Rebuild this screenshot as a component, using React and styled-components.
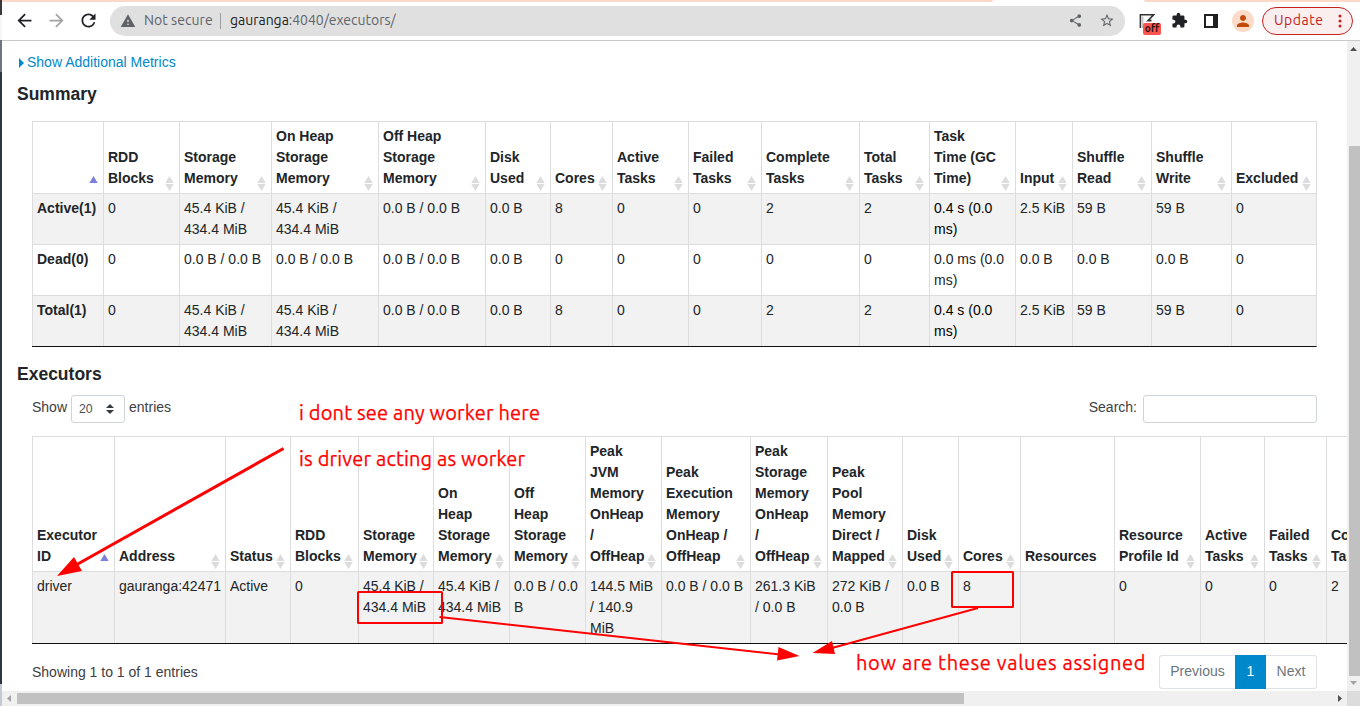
import React from "react";
import styled, { createGlobalStyle } from "styled-components";
import {
  MdArrowBack,
  MdArrowForward,
  MdRefresh,
  MdWarning,
  MdShare,
  MdStarBorder,
  MdExtension,
  MdPerson,
} from "react-icons/md";

const Global = createGlobalStyle`
  *, *::before, *::after { box-sizing: border-box; }
  body {
    margin: 0;
    overflow: hidden;
    background: #fff;
    color: #212529;
    font: 14px/21px "Liberation Sans", Arial, sans-serif;
  }
`;

const uiFont = `Ubuntu, "Noto Sans", sans-serif`;

const Screen = styled.div`
  position: relative;
  display: flex;
  width: 1360px;
  height: 706px;
  overflow: hidden;
`;

const DesktopEdge = styled.div`
  flex: 0 0 2px;
  background: linear-gradient(
    to bottom,
    #3a3a3a 0 15px,
    #f6f6f6 15px 40px,
    #70747f 40px 72px,
    #2b3643 72px 684px,
    #c4c9d3 684px
  );
`;

const Browser = styled.div`
  flex: 1;
  min-width: 0;
  display: flex;
  flex-direction: column;
`;

/* ---------- browser toolbar ---------- */

const TabStrip = styled.div`
  display: flex;
  justify-content: space-between;
  height: 2px;
  background: #fff;
`;

const TabEdge = styled.span`
  width: ${(p) => p.$width}px;
  background: #fcd9c6;
  border-radius: ${(p) => (p.$right ? "0 0 0 3px" : "0 0 3px 0")};
`;

const Toolbar = styled.div`
  display: flex;
  align-items: center;
  height: 39px;
  padding: 0 7px 1px 11px;
  border-bottom: 1px solid #c9c9c9;
  font-family: ${uiFont};
`;

const NavButton = styled.span`
  flex: none;
  display: flex;
  align-items: center;
  justify-content: center;
  width: 22px;
  height: 22px;
  margin-right: 10px;
  color: ${(p) => (p.$muted ? "#a3a3a3" : "#202124")};
`;

const Omnibox = styled.div`
  flex: 0 0 1015px;
  display: flex;
  align-items: center;
  height: 30px;
  margin-left: 1px;
  padding: 0 10px;
  border-radius: 15px;
  background: #e0e0e0;
  color: #5f6368;
`;

const SecurityLabel = styled.span`
  width: 76px;
  margin-left: 8px;
  font-size: 14px;
  letter-spacing: 0.05px;
  white-space: nowrap;
`;

const Divider = styled.span`
  width: 1px;
  height: 16px;
  margin-right: 9px;
  background: #9a9da1;
`;

const Url = styled.span`
  flex: 1;
  font-size: 14px;
  letter-spacing: -0.02px;
  white-space: nowrap;

  b {
    font-weight: 400;
    color: #202124;
  }
`;

const BoxAction = styled.span`
  display: flex;
  justify-content: center;
  width: 16px;
  margin-left: ${(p) => p.$gap || 0}px;
`;

const Extensions = styled.div`
  flex: none;
  display: flex;
  align-items: center;
  margin-left: 11px;
  color: #202124;
`;

const ExtensionSlot = styled.span`
  position: relative;
  display: flex;
  align-items: center;
  justify-content: center;
  width: 22px;
  height: 22px;
  margin-right: 10px;
`;

const OffBadge = styled.span`
  position: absolute;
  left: 7px;
  top: 13px;
  width: 18px;
  height: 12px;
  border-radius: 2px;
  background: #ff544d;
  color: #2b1010;
  font: 700 10px/12px ${uiFont};
  text-align: center;
`;

const Avatar = styled.span`
  display: flex;
  align-items: center;
  justify-content: center;
  width: 22px;
  height: 22px;
  border-radius: 50%;
  background: #fcdac8;
  color: #c2490b;
`;

const UpdateButton = styled.span`
  display: flex;
  align-items: center;
  justify-content: space-between;
  width: 91px;
  height: 28px;
  margin-left: 8px;
  padding: 0 10px 0 11px;
  border: 1px solid #c5221f;
  border-radius: 14px;
  background: #faeeee;
  color: #c5221f;
  font-size: 14px;
  letter-spacing: 0.55px;
`;

/* ---------- page ---------- */

const Viewport = styled.div`
  flex: 1;
  min-height: 0;
  display: flex;
`;

const Page = styled.main`
  flex: 1;
  min-width: 0;
  overflow: hidden;
  padding: 11px 0 0 15px;
`;

const MetricsLink = styled.div`
  display: flex;
  align-items: center;
  gap: 3px;
  height: 21px;
  padding-left: 2px;
  color: #0088cc;
`;

const Heading = styled.h4`
  margin: ${(p) => p.$top}px 0 0;
  font-size: 17.5px;
  line-height: 21px;
  font-weight: 700;
`;

const Section = styled.section`
  padding: ${(p) => p.$top}px 0 0 15px;
`;

const Table = styled.table`
  table-layout: fixed;
  width: ${(p) => p.$width}px;
  border-collapse: separate;
  border-spacing: 0;
  border-right: 1px solid #dddddd;
  border-bottom: 1px solid #111;
`;

const HeadCell = styled.th`
  position: relative;
  padding: 4px;
  border-top: 1px solid #dddddd;
  border-left: 1px solid #dddddd;
  text-align: left;
  vertical-align: bottom;
  white-space: pre;
`;

const Cell = styled.td`
  height: ${(p) => p.$height}px;
  padding: 4px;
  border-top: 1px solid #dddddd;
  border-left: 1px solid #dddddd;
  background: ${(p) => (p.$striped ? "#f2f2f2" : "#fff")};
  color: ${(p) => (p.$dark ? "#000" : "inherit")};
  font-weight: ${(p) => (p.$bold ? 700 : 400)};
  vertical-align: top;
  white-space: pre;
`;

const SortMark = styled.svg`
  position: absolute;
  right: 4px;
  bottom: 2px;
`;

const Controls = styled.div`
  display: flex;
  justify-content: space-between;
  width: 1285px;
  height: 28px;
  margin-bottom: 13px;
  color: #3c4043;
`;

const ControlLabel = styled.label`
  display: flex;
  align-items: flex-start;
  line-height: 25px;
`;

const LengthSelect = styled.span`
  display: flex;
  align-items: center;
  justify-content: space-between;
  width: 54px;
  height: 28px;
  margin: 0 4px;
  padding: 0 10px 0 7px;
  border: 1px solid #ced4da;
  border-radius: 3px;
  color: #495057;
  font-size: 12.25px;
`;

const SearchInput = styled.input`
  width: 174px;
  height: 28px;
  margin-left: 6px;
  border: 1px solid #ced4da;
  border-radius: 3px;
  background: #fff;
`;

const Footer = styled.div`
  display: flex;
  justify-content: space-between;
  width: 1285px;
  padding-top: 11px;
  color: #3c4043;
`;

const Info = styled.span`
  padding-top: 7px;
`;

const Pagination = styled.div`
  display: flex;
  height: 34px;
  line-height: 31px;
`;

const PageButton = styled.span`
  width: ${(p) => p.$width}px;
  border: 1px solid ${(p) => (p.$active ? "#0088cc" : "#dee2e6")};
  border-left-width: ${(p) => (p.$last ? 0 : 1)}px;
  border-right-width: ${(p) => (p.$first ? 0 : 1)}px;
  border-radius: ${(p) => (p.$first ? "3px 0 0 3px" : p.$last ? "0 3px 3px 0" : 0)};
  background: ${(p) => (p.$active ? "#0088cc" : "#fff")};
  color: ${(p) => (p.$active ? "#fff" : "#6c757d")};
  text-align: center;
`;

/* ---------- scrollbars ---------- */

const VScroll = styled.div`
  flex: 0 0 13px;
  display: flex;
  flex-direction: column;
  align-items: center;
  justify-content: space-between;
  padding: 6px 0;
  background: #f0f0f0;
`;

const VThumb = styled.div`
  width: 11px;
  height: 530px;
  margin: 90px 0 0 2px;
  background: #c1c1c1;
`;

const HScroll = styled.div`
  flex: 0 0 15px;
  display: flex;
  align-items: center;
  padding-left: 5px;
  background: #f0f0f0;
`;

const HThumb = styled.div`
  width: 947px;
  height: 11px;
  margin-left: 6px;
  background: #c1c1c1;
`;

const HSpace = styled.div`
  flex: 1;
  display: flex;
  justify-content: flex-end;
  padding-right: 5px;
`;

const Corner = styled.div`
  width: 13px;
  height: 15px;
  background: #dcdcdc;
`;

/* ---------- red annotations ---------- */

const Markup = styled.svg`
  position: absolute;
  left: 0;
  top: 0;
  pointer-events: none;
`;

const Note = styled.div`
  position: absolute;
  left: ${(p) => p.$x}px;
  top: ${(p) => p.$y}px;
  color: #ff0000;
  font: 20px/28px ${uiFont};
  letter-spacing: ${(p) => p.$track}px;
  -webkit-text-stroke: 0.25px #ff0000;
  white-space: nowrap;
`;

const summaryColumns = [
  [71, "", "asc"],
  [76, "RDD\nBlocks"],
  [92, "Storage\nMemory"],
  [107, "On Heap\nStorage\nMemory"],
  [107, "Off Heap\nStorage\nMemory"],
  [65, "Disk\nUsed"],
  [62, "Cores"],
  [76, "Active\nTasks"],
  [73, "Failed\nTasks"],
  [98, "Complete\nTasks"],
  [70, "Total\nTasks"],
  [86, "Task\nTime (GC\nTime)"],
  [57, "Input"],
  [79, "Shuffle\nRead"],
  [80, "Shuffle\nWrite"],
  [85, "Excluded"],
];

const used = "45.4 KiB /\n434.4 MiB";
const none = "0.0 B / 0.0 B";

const summaryRows = [
  ["Active(1)", "0", used, used, none, "0.0 B", "8", "0", "0", "2", "2", "0.4 s (0.0\nms)", "2.5 KiB", "59 B", "59 B", "0"],
  ["Dead(0)", "0", none, none, none, "0.0 B", "0", "0", "0", "0", "0", "0.0 ms (0.0\nms)", "0.0 B", "0.0 B", "0.0 B", "0"],
  ["Total(1)", "0", used, used, none, "0.0 B", "8", "0", "0", "2", "2", "0.4 s (0.0\nms)", "2.5 KiB", "59 B", "59 B", "0"],
];

const executorColumns = [
  [82, "Executor\nID", "asc"],
  [111, "Address"],
  [65, "Status"],
  [68, "RDD\nBlocks"],
  [75, "Storage\nMemory"],
  [76, "On\nHeap\nStorage\nMemory"],
  [76, "Off\nHeap\nStorage\nMemory"],
  [76, "Peak\nJVM\nMemory\nOnHeap\n/\nOffHeap"],
  [89, "Peak\nExecution\nMemory\nOnHeap /\nOffHeap"],
  [77, "Peak\nStorage\nMemory\nOnHeap\n/\nOffHeap"],
  [75, "Peak\nPool\nMemory\nDirect /\nMapped"],
  [56, "Disk\nUsed"],
  [62, "Cores"],
  [94, "Resources", "none"],
  [86, "Resource\nProfile Id"],
  [64, "Active\nTasks"],
  [62, "Failed\nTasks"],
  [88, "Complete\nTasks"],
];

const executorRow = [
  "driver", "gauranga:42471", "Active", "0", used, used, "0.0 B / 0.0\nB",
  "144.5 MiB\n/ 140.9\nMiB", none, "261.3 KiB\n/ 0.0 B", "272 KiB /\n0.0 B",
  "0.0 B", "8", "", "0", "0", "0", "2",
];

function Sort({ kind }) {
  if (kind === "none") return null;
  if (kind === "asc") {
    return (
      <SortMark width="10" height="15" viewBox="0 0 10 15">
        <path d="M4.5 0 8.7 7H.3z" fill="#7b80dc" />
      </SortMark>
    );
  }
  return (
    <SortMark width="10" height="15" viewBox="0 0 10 15">
      <path d="M4.5 0 8.7 7H.3zM.3 8h8.4L4.5 15z" fill="#dcdcdc" />
    </SortMark>
  );
}

function DataTable({ columns, rows, cellHeight, boldFirst, darkColumn }) {
  const width = columns.reduce((sum, c) => sum + c[0], 0) + 1;
  return (
    <Table $width={width}>
      <colgroup>
        {columns.map((c, i) => (
          <col key={i} style={{ width: c[0] }} />
        ))}
      </colgroup>
      <thead>
        <tr>
          {columns.map(([, label, kind], i) => (
            <HeadCell key={i}>
              {label}
              <Sort kind={kind} />
            </HeadCell>
          ))}
        </tr>
      </thead>
      <tbody>
        {rows.map((row, r) => (
          <tr key={r}>
            {row.map((value, i) => (
              <Cell
                key={i}
                $height={cellHeight}
                $striped={r % 2 === 0}
                $bold={boldFirst && i === 0}
                $dark={r % 2 === 0 && i === darkColumn}
              >
                {value}
              </Cell>
            ))}
          </tr>
        ))}
      </tbody>
    </Table>
  );
}

export default function App() {
  return (
    <>
      <Global />
      <Screen>
        <DesktopEdge />
        <Browser>
          <TabStrip>
            <TabEdge $width={991} />
            <TabEdge $width={216} $right />
          </TabStrip>
          <Toolbar>
            <NavButton><MdArrowBack size={21} /></NavButton>
            <NavButton $muted><MdArrowForward size={21} /></NavButton>
            <NavButton><MdRefresh size={21} /></NavButton>
            <Omnibox>
              <MdWarning size={16} />
              <SecurityLabel>Not secure</SecurityLabel>
              <Divider />
              <Url><b>gauranga</b>:4040/executors/</Url>
              <BoxAction><MdShare size={15} /></BoxAction>
              <BoxAction $gap={16}><MdStarBorder size={17} /></BoxAction>
            </Omnibox>
            <Extensions>
              <ExtensionSlot>
                <svg width="16" height="16" viewBox="0 0 16 16" fill="none" stroke="#333" strokeWidth="1.6">
                  <path d="M1.4 15V1.8H14.5L9 7.6h3.5" />
                  <path d="M3.8 15V3.5" stroke="#aaa" strokeWidth="1" />
                </svg>
                <OffBadge>off</OffBadge>
              </ExtensionSlot>
              <ExtensionSlot><MdExtension size={17} /></ExtensionSlot>
              <ExtensionSlot>
                <svg width="14" height="14" viewBox="0 0 14 14">
                  <path d="M0 0h14v14H0zM2 2v10h7V2z" fill="#202124" fillRule="evenodd" />
                </svg>
              </ExtensionSlot>
              <Avatar><MdPerson size={18} /></Avatar>
              <UpdateButton>
                Update
                <svg width="4" height="14" viewBox="0 0 4 14" fill="#c5221f">
                  <circle cx="2" cy="2" r="1.5" />
                  <circle cx="2" cy="7" r="1.5" />
                  <circle cx="2" cy="12" r="1.5" />
                </svg>
              </UpdateButton>
            </Extensions>
          </Toolbar>

          <Viewport>
            <Page>
              <MetricsLink>
                <svg width="5" height="10" viewBox="0 0 5 10"><path d="M0 0 5 5 0 10z" fill="#0088cc" /></svg>
                Show Additional Metrics
              </MetricsLink>
              <Heading $top={11}>Summary</Heading>
              <Section $top={16}>
                <DataTable columns={summaryColumns} rows={summaryRows} cellHeight={51} boldFirst darkColumn={11} />
              </Section>
              <Heading $top={17}>Executors</Heading>
              <Section $top={10}>
                <Controls>
                  <ControlLabel>
                    Show
                    <LengthSelect>
                      20
                      <svg width="8" height="10" viewBox="0 0 8 10" fill="#343a40">
                        <path d="M4 0 8 4H0zM0 6h8l-4 4z" />
                      </svg>
                    </LengthSelect>
                    entries
                  </ControlLabel>
                  <ControlLabel>
                    Search:
                    <SearchInput />
                  </ControlLabel>
                </Controls>
                <DataTable columns={executorColumns} rows={[executorRow]} cellHeight={72} />
                <Footer>
                  <Info>Showing 1 to 1 of 1 entries</Info>
                  <Pagination>
                    <PageButton $width={76} $first>Previous</PageButton>
                    <PageButton $width={31} $active>1</PageButton>
                    <PageButton $width={51} $last>Next</PageButton>
                  </Pagination>
                </Footer>
              </Section>
            </Page>
            <VScroll>
              <svg width="7" height="4" viewBox="0 0 7 4"><path d="M3.5 0 7 4H0z" fill="#505050" /></svg>
              <VThumb />
              <svg width="7" height="4" viewBox="0 0 7 4"><path d="M0 0h7L3.5 4z" fill="#a3a3a3" /></svg>
            </VScroll>
          </Viewport>
          <HScroll>
            <svg width="4" height="7" viewBox="0 0 4 7"><path d="M4 0v7L0 3.5z" fill="#a3a3a3" /></svg>
            <HThumb />
            <HSpace>
              <svg width="4" height="7" viewBox="0 0 4 7"><path d="M0 0v7l4-3.5z" fill="#505050" /></svg>
            </HSpace>
            <Corner />
          </HScroll>
        </Browser>

        <Markup width="1360" height="706" viewBox="0 0 1360 706" fill="none" stroke="#f00" strokeWidth="2">
          <rect x="358" y="592" width="84" height="31" rx="0.5" />
          <rect x="952" y="572" width="61" height="35" rx="0.5" />
          <path d="M283.5 448.5 76 565" strokeWidth="3" />
          <path d="M439.5 617 780 654.5" />
          <path d="M978 608 832 648" />
          <path d="M57 576 74 557 82 571zM799.5 656 778.5 647 777 660.5zM812.5 653 832 641 835 654z" fill="#f00" stroke="none" />
        </Markup>
        <Note $x={299} $y={399} $track={0.18}>i dont see any worker here</Note>
        <Note $x={299} $y={445} $track={0.18}>is driver acting as worker</Note>
        <Note $x={856} $y={649} $track={0.68}>how are these values assigned</Note>
      </Screen>
    </>
  );
}
